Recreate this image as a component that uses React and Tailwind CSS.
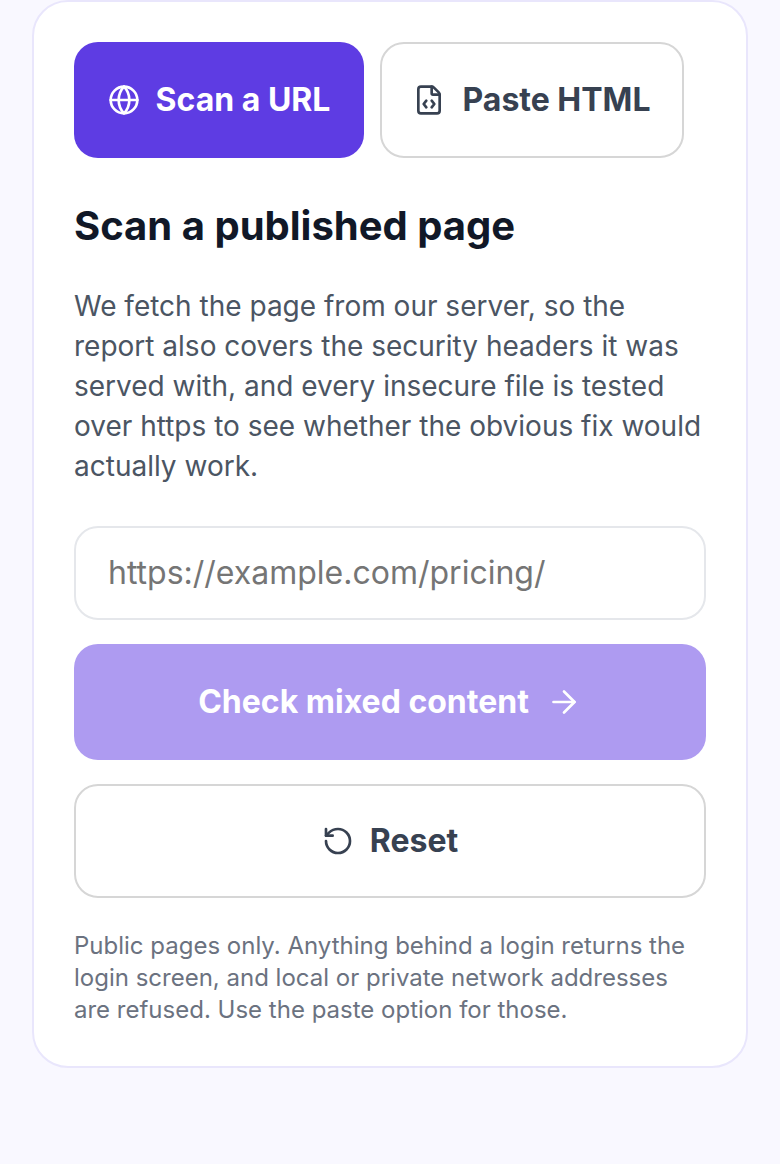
import { Globe, FileCode, ArrowRight, RotateCcw } from "lucide-react";

export default function App() {
  return (
    <div className="min-h-[1164px] bg-[#f9f8ff] px-[32px] pt-0 font-['Inter',sans-serif] antialiased">
      <div className="rounded-[36px] border-2 border-[#e9e6fc] bg-white px-[40px] pt-[40px] pb-[40px]">
        <div className="flex gap-4">
          <button className="flex h-[116px] w-[290px] items-center justify-center gap-4 rounded-3xl bg-[#5e3ce3] text-[32px] font-[650] text-white">
            <Globe size={32} strokeWidth={2} />
            Scan a URL
          </button>
          <button className="flex h-[116px] w-[304px] items-center justify-center gap-[17px] rounded-3xl border-2 border-[#d6d6d6] bg-white text-[32px] font-[650] text-[#374151]">
            <FileCode size={32} strokeWidth={2} />
            Paste HTML
          </button>
        </div>
        <h2 className="mt-[42px] text-[40px] leading-[52px] font-bold text-[#111827]">Scan a published page</h2>
        <p className="mt-[34px] text-[28px] leading-10 text-[#4b5563]">
          We fetch the page from our server, so the report also covers the security headers it was served with, and every insecure file is tested over https to see whether the obvious fix would actually work.
        </p>
        <div className="mt-10 flex h-[94px] items-center rounded-3xl border-2 border-[#e5e7eb] px-8 text-[32px] text-[#757575]">
          https://example.com/pricing/
        </div>
        <button className="mt-6 flex h-[116px] w-full items-center justify-center gap-[17px] rounded-3xl bg-[#ae9bf1] text-[32px] font-[650] text-white">
          Check mixed content
          <ArrowRight size={36} strokeWidth={1.8} />
        </button>
        <button className="mt-6 flex h-[114px] w-full items-center justify-center gap-4 rounded-3xl border-2 border-[#d6d6d6] bg-white text-[32px] font-[650] text-[#374151]">
          <RotateCcw size={32} strokeWidth={2} />
          Reset
        </button>
        <p className="mt-8 text-[24px] leading-8 text-[#6b7280]">
          Public pages only. Anything behind a login returns the login screen, and local or private network addresses are refused. Use the paste option for those.
        </p>
      </div>
    </div>
  );
}
